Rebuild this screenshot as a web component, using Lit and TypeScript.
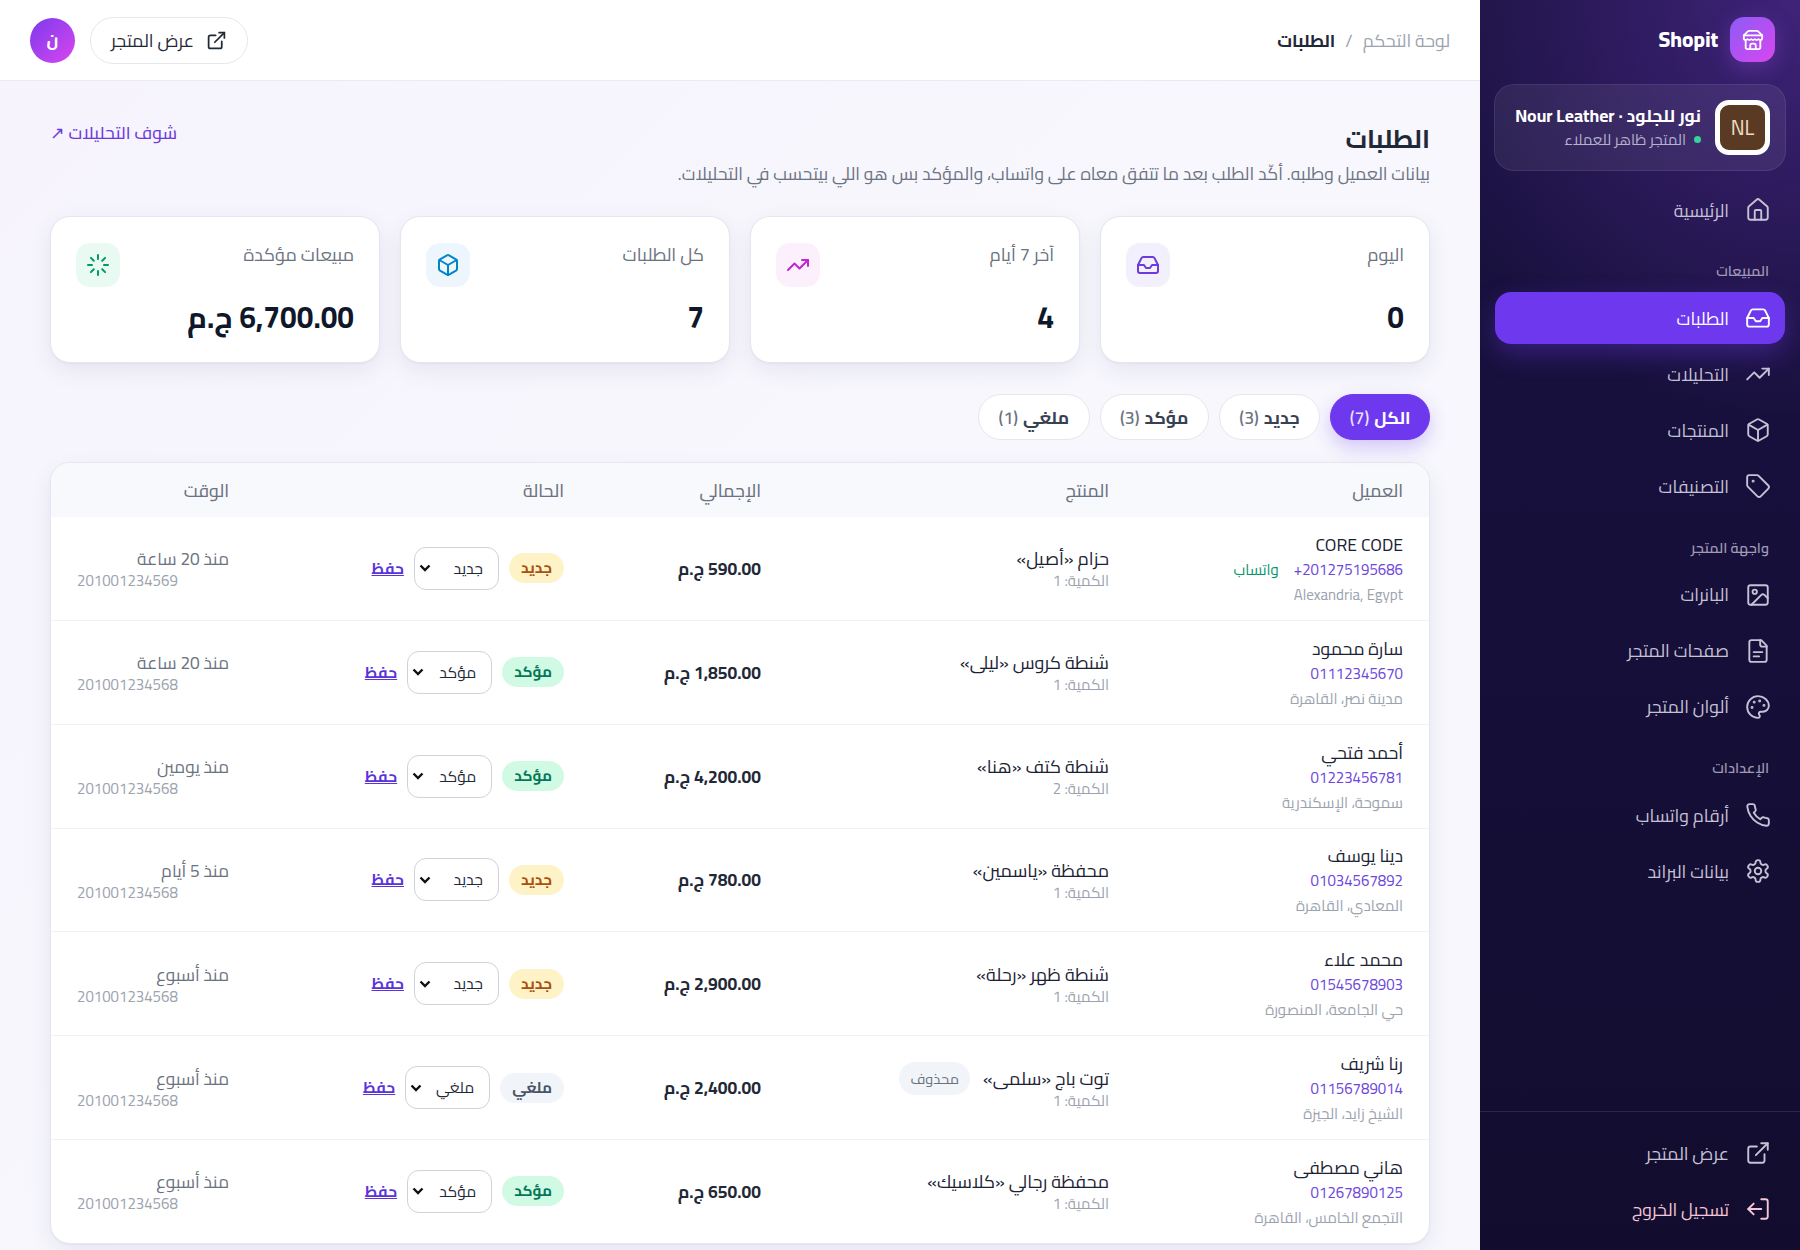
import { LitElement, html, css, svg } from "lit";
import { customElement } from "lit/decorators.js";

const I: Record<string, any> = {
  store: svg`<path d="m2 7 4.41-4.41A2 2 0 0 1 7.83 2h8.34a2 2 0 0 1 1.42.59L22 7"/><path d="M4 12v8a2 2 0 0 0 2 2h12a2 2 0 0 0 2-2v-8"/><path d="M15 22v-4a2 2 0 0 0-2-2h-2a2 2 0 0 0-2 2v4"/><path d="M2 7h20"/><path d="M22 7v3a2 2 0 0 1-2 2a2.7 2.7 0 0 1-1.59-.63.7.7 0 0 0-.82 0A2.7 2.7 0 0 1 16 12a2.7 2.7 0 0 1-1.59-.63.7.7 0 0 0-.82 0A2.7 2.7 0 0 1 12 12a2.7 2.7 0 0 1-1.59-.63.7.7 0 0 0-.82 0A2.7 2.7 0 0 1 8 12a2.7 2.7 0 0 1-1.59-.63.7.7 0 0 0-.82 0A2.7 2.7 0 0 1 4 12a2 2 0 0 1-2-2V7"/>`,
  home: svg`<path d="M15 21v-8a1 1 0 0 0-1-1h-4a1 1 0 0 0-1 1v8"/><path d="M3 10a2 2 0 0 1 .709-1.528l7-5.999a2 2 0 0 1 2.582 0l7 5.999A2 2 0 0 1 21 10v9a2 2 0 0 1-2 2H5a2 2 0 0 1-2-2z"/>`,
  inbox: svg`<polyline points="22 12 16 12 14 15 10 15 8 12 2 12"/><path d="M5.45 5.11 2 12v6a2 2 0 0 0 2 2h16a2 2 0 0 0 2-2v-6l-3.45-6.89A2 2 0 0 0 16.76 4H7.24a2 2 0 0 0-1.79 1.11z"/>`,
  trend: svg`<polyline points="22 7 13.5 15.5 8.5 10.5 2 17"/><polyline points="16 7 22 7 22 13"/>`,
  box: svg`<path d="M21 8a2 2 0 0 0-1-1.73l-7-4a2 2 0 0 0-2 0l-7 4A2 2 0 0 0 3 8v8a2 2 0 0 0 1 1.73l7 4a2 2 0 0 0 2 0l7-4A2 2 0 0 0 21 16Z"/><path d="m3.3 7 8.7 5 8.7-5"/><path d="M12 22V12"/>`,
  tag: svg`<path d="M12.586 2.586A2 2 0 0 0 11.172 2H4a2 2 0 0 0-2 2v7.172a2 2 0 0 0 .586 1.414l8.704 8.704a2.426 2.426 0 0 0 3.42 0l6.58-6.58a2.426 2.426 0 0 0 0-3.42z"/><circle cx="7.5" cy="7.5" r=".5" fill="currentColor"/>`,
  image: svg`<rect width="18" height="18" x="3" y="3" rx="2" ry="2"/><circle cx="9" cy="9" r="2"/><path d="m21 15-3.086-3.086a2 2 0 0 0-2.828 0L6 21"/>`,
  file: svg`<path d="M15 2H6a2 2 0 0 0-2 2v16a2 2 0 0 0 2 2h12a2 2 0 0 0 2-2V7Z"/><path d="M14 2v4a2 2 0 0 0 2 2h4"/><path d="M16 13H8"/><path d="M13 17H8"/>`,
  palette: svg`<circle cx="13.5" cy="6.5" r=".5" fill="currentColor"/><circle cx="17.5" cy="10.5" r=".5" fill="currentColor"/><circle cx="8.5" cy="7.5" r=".5" fill="currentColor"/><circle cx="6.5" cy="12.5" r=".5" fill="currentColor"/><path d="M12 2C6.5 2 2 6.5 2 12s4.5 10 10 10c.926 0 1.648-.746 1.648-1.688 0-.437-.18-.835-.437-1.125-.29-.289-.438-.652-.438-1.125a1.64 1.64 0 0 1 1.668-1.668h1.996c3.051 0 5.555-2.503 5.555-5.554C21.965 6.012 17.461 2 12 2z"/>`,
  phone: svg`<path d="M22 16.92v3a2 2 0 0 1-2.18 2 19.79 19.79 0 0 1-8.63-3.07 19.5 19.5 0 0 1-6-6 19.79 19.79 0 0 1-3.07-8.67A2 2 0 0 1 4.11 2h3a2 2 0 0 1 2 1.72 12.84 12.84 0 0 0 .7 2.81 2 2 0 0 1-.45 2.11L8.09 9.91a16 16 0 0 0 6 6l1.27-1.27a2 2 0 0 1 2.11-.45 12.84 12.84 0 0 0 2.81.7A2 2 0 0 1 22 16.92z"/>`,
  settings: svg`<path d="M12.22 2h-.44a2 2 0 0 0-2 2v.18a2 2 0 0 1-1 1.73l-.43.25a2 2 0 0 1-2 0l-.15-.08a2 2 0 0 0-2.73.73l-.22.38a2 2 0 0 0 .73 2.73l.15.1a2 2 0 0 1 1 1.72v.51a2 2 0 0 1-1 1.74l-.15.09a2 2 0 0 0-.73 2.73l.22.38a2 2 0 0 0 2.73.73l.15-.08a2 2 0 0 1 2 0l.43.25a2 2 0 0 1 1 1.73V20a2 2 0 0 0 2 2h.44a2 2 0 0 0 2-2v-.18a2 2 0 0 1 1-1.73l.43-.25a2 2 0 0 1 2 0l.15.08a2 2 0 0 0 2.73-.73l.22-.39a2 2 0 0 0-.73-2.73l-.15-.08a2 2 0 0 1-1-1.74v-.5a2 2 0 0 1 1-1.74l.15-.09a2 2 0 0 0 .73-2.73l-.22-.38a2 2 0 0 0-2.73-.73l-.15.08a2 2 0 0 1-2 0l-.43-.25a2 2 0 0 1-1-1.73V4a2 2 0 0 0-2-2z"/><circle cx="12" cy="12" r="3"/>`,
  ext: svg`<path d="M15 3h6v6"/><path d="M10 14 21 3"/><path d="M18 13v6a2 2 0 0 1-2 2H5a2 2 0 0 1-2-2V8a2 2 0 0 1 2-2h6"/>`,
  logout: svg`<path d="M15 21h4a2 2 0 0 0 2-2V5a2 2 0 0 0-2-2h-4"/><polyline points="8 17 3 12 8 7"/><line x1="3" y1="12" x2="15" y2="12"/>`,
  loader: svg`<path d="M12 2v4"/><path d="m16.2 7.8 2.9-2.9"/><path d="M18 12h4"/><path d="m16.2 16.2 2.9 2.9"/><path d="M12 18v4"/><path d="m4.9 19.1 2.9-2.9"/><path d="M2 12h4"/><path d="m4.9 4.9 2.9 2.9"/>`,
};
const ic = (n: string, sw = 1.75) => html`<svg class="ic" viewBox="0 0 24 24" fill="none" stroke="currentColor" stroke-width=${sw} stroke-linecap="round" stroke-linejoin="round">${I[n]}</svg>`;

type Order = { name: string; phone: string; wa?: boolean; loc: string; product: string; qty: number; deleted?: boolean; total: string; st: "new" | "ok" | "no"; time: string; ref: string };
const ST = { new: "جديد", ok: "مؤكد", no: "ملغي" };
const orders: Order[] = [
  { name: "CORE CODE", phone: "+201275195686", wa: true, loc: "Alexandria, Egypt", product: "حزام «أصيل»", qty: 1, total: "590.00", st: "new", time: "منذ 20 ساعة", ref: "201001234569" },
  { name: "سارة محمود", phone: "01112345670", loc: "مدينة نصر، القاهرة", product: "شنطة كروس «ليلى»", qty: 1, total: "1,850.00", st: "ok", time: "منذ 20 ساعة", ref: "201001234568" },
  { name: "أحمد فتحي", phone: "01223456781", loc: "سموحة، الإسكندرية", product: "شنطة كتف «هنا»", qty: 2, total: "4,200.00", st: "ok", time: "منذ يومين", ref: "201001234568" },
  { name: "دينا يوسف", phone: "01034567892", loc: "المعادي، القاهرة", product: "محفظة «ياسمين»", qty: 1, total: "780.00", st: "new", time: "منذ 5 أيام", ref: "201001234568" },
  { name: "محمد علاء", phone: "01545678903", loc: "حي الجامعة، المنصورة", product: "شنطة ظهر «رحلة»", qty: 1, total: "2,900.00", st: "new", time: "منذ أسبوع", ref: "201001234568" },
  { name: "رنا شريف", phone: "01156789014", loc: "الشيخ زايد، الجيزة", product: "توت باج «سلمى»", qty: 1, deleted: true, total: "2,400.00", st: "no", time: "منذ أسبوع", ref: "201001234568" },
  { name: "هاني مصطفى", phone: "01267890125", loc: "التجمع الخامس، القاهرة", product: "محفظة رجالي «كلاسيك»", qty: 1, total: "650.00", st: "ok", time: "منذ أسبوع", ref: "201001234568" },
];

@customElement("app-root")
export class AppRoot extends LitElement {
  static styles = css`
    :host { display: block; height: 1250px; overflow: hidden; font-family: "Cairo", Roboto, "Noto Sans Arabic", "DejaVu Sans", sans-serif; color: #111827; }
    * { box-sizing: border-box; }
    .app { display: flex; height: 1250px; direction: rtl; }
    .ic { width: 26px; height: 26px; flex: none; display: block; }

    .side { width: 320px; flex: none; height: 1250px; display: flex; flex-direction: column; color: #c6c2d6;
      background: radial-gradient(400px 420px at 100% 0, #3f2379 0%, rgba(63,35,121,0) 100%), linear-gradient(180deg, #1a1240, #160f3a 50%, #120d2e); }
    .logo { display: flex; gap: 12px; padding: 17px 25px 0; height: 84px; align-items: flex-start; }
    .logo-ic { width: 45px; height: 45px; border-radius: 14px; background: linear-gradient(135deg, #8b5cf6, #d946ef); display: flex; align-items: center; justify-content: center; color: #fff; box-shadow: 0 6px 22px rgba(168,85,247,.3); }
    .logo-ic .ic { width: 22px; height: 22px; }
    .logo-t { color: #fff; font-weight: 800; font-size: 21px; line-height: 45px; direction: ltr; }
    .brand { margin: 0 14px; height: 87px; border-radius: 20px; border: 1px solid rgba(255,255,255,.08); background: rgba(255,255,255,.07); display: flex; align-items: center; gap: 14px; padding: 0 15px; }
    .brand-av { width: 55px; height: 55px; border-radius: 14px; border: 5px solid #fff; background: #5a3a22; color: #ecdcc4; display: flex; align-items: center; justify-content: center; font-size: 20.5px; flex: none; }
    .brand-n { color: #fff; font-weight: 700; font-size: 17.6px; line-height: 24px; white-space: nowrap; }
    .brand-s { font-size: 15px; line-height: 24px; color: #b7b1cc; display: flex; align-items: center; gap: 8px; white-space: nowrap; }
    .dot { width: 7px; height: 7px; border-radius: 50%; background: #34d399; }
    .nav { flex: 1; padding: 13px 15px 0; display: flex; flex-direction: column; gap: 4px; }
    .item { height: 52px; border-radius: 16px; display: flex; align-items: center; gap: 16px; padding: 0 14px; font-size: 17.6px; white-space: nowrap; }
    .item.on { background: #6d38ee; color: #fff; box-shadow: 0 10px 26px rgba(109,56,238,.35); }
    .sec { font-size: 14.5px; font-weight: 600; color: #a09ab5; padding: 0 16px; height: 20px; line-height: 20px; margin: 21.5px 0 7px; }
    .sec.first { margin-top: 21px; }
    .foot { border-top: 1px solid rgba(255,255,255,.1); padding: 15px 15px; display: flex; flex-direction: column; gap: 4px; height: 139px; }
    .pink { color: #f5c6d8; }

    .main { flex: 1; min-width: 0; background: linear-gradient(135deg, #f6f3fd, #f7f7fd 50%, #f7f7fd); display: flex; flex-direction: column; height: 1250px; overflow: hidden; }
    .top { height: 81px; flex: none; background: #fff; border-bottom: 1px solid #ebe9f3; display: flex; align-items: center; justify-content: space-between; padding: 0 30px; }
    .crumb { display: flex; gap: 10px; font-size: 17.6px; color: #9ca3af; align-items: center; }
    .crumb b { color: #1f2937; font-weight: 700; font-size: 17.6px; }
    .top-l { display: flex; align-items: center; gap: 15px; }
    .show { height: 47px; border: 1px solid #e5e7eb; border-radius: 24px; background: #fff; display: flex; align-items: center; gap: 12px; padding: 0 20px; font-size: 17.6px; color: #1f2937; }
    .show .ic { width: 21px; height: 21px; }
    .me { width: 45px; height: 45px; border-radius: 50%; background: linear-gradient(135deg, #7c3aed, #d946ef); color: #fff; font-weight: 700; display: flex; align-items: center; justify-content: center; font-size: 17px; }

    .page { padding: 39px 50px 0; }
    .head { display: flex; justify-content: space-between; align-items: flex-start; height: 96px; }
    .title { font-size: 25.6px; font-weight: 700; line-height: 38px; margin: 0; color: #1f2937; }
    .sub { font-size: 17.5px; line-height: 26px; color: #6b7280; margin: 3px 0 0; }
    .lnk { color: #6d3bdc; font-size: 17.4px; line-height: 26px; font-weight: 500; }
    .cards { display: grid; grid-template-columns: repeat(4, 1fr); gap: 20px; }
    .card { height: 147px; background: #fff; border: 1px solid #e7e6f0; border-radius: 20px; padding: 26px 25px 0; box-shadow: 0 8px 24px rgba(30,20,80,.07), 0 1px 2px rgba(30,20,80,.04); }
    .card-r { display: flex; justify-content: space-between; height: 44px; }
    .card-l { font-size: 18px; color: #6b7280; line-height: 24px; }
    .card-i { width: 44px; height: 44px; border-radius: 14px; display: flex; align-items: center; justify-content: center; }
    .card-i .ic { width: 24px; height: 24px; }
    .v { background: #f3f0fe; color: #6d3bdc; } .f { background: #fdf0fd; color: #c026d3; } .b { background: #eef6fd; color: #0284c7; } .g { background: #e8faf2; color: #059669; }
    .card-v { font-size: 30px; font-weight: 700; line-height: 40px; margin-top: 10px; color: #0f172a; }
    .tabs { display: flex; gap: 10px; margin: 31px 0 22px; height: 46px; }
    .tab { height: 46px; border-radius: 23px; background: #fff; border: 1px solid #e5e7eb; padding: 0 19.5px; font-size: 17.6px; font-weight: 700; color: #374151; display: flex; align-items: center; gap: 5px; white-space: nowrap; }
    .tab span { font-weight: 600; color: #6b7280; }
    .tab.on { background: #6d38ee; color: #fff; border-color: #6d38ee; padding: 0 18.5px; box-shadow: 0 8px 18px rgba(109,56,238,.25); }
    .tab.on span { color: #e9e3ff; }
    .wrap { background: #fff; border: 1px solid #e7e6f0; border-radius: 20px; overflow: hidden; box-shadow: 0 8px 24px rgba(30,20,80,.07), 0 1px 2px rgba(30,20,80,.04); }
    table { border-collapse: collapse; width: 100%; table-layout: fixed; }
    th { height: 54px; background: #f8f9fc; font-size: 17.6px; font-weight: 500; color: #6b7280; text-align: right; padding: 0 26px; }
    td { padding: 13.93px 26px; border-top: 1px solid #f1f2f6; vertical-align: middle; text-align: right; }
    td.cust { padding-top: 14.93px; padding-bottom: 12.93px; }
    td.low { padding-top: 15.43px; padding-bottom: 12.43px; }
    tbody tr:first-child td { border-top: 0; }
    .n { font-size: 17.6px; line-height: 25px; white-space: nowrap; color: #1a2233; }
    .l2 { line-height: 25px; font-size: 15px; display: flex; gap: 15px; }
    .ph { color: #6d46dc; }
    .wa { color: #059669; }
    .loc { font-size: 15px; line-height: 25px; color: #9ca3af; white-space: nowrap; }
    .pn { display: flex; align-items: center; gap: 13px; height: 22px; }
    .pn-t { font-size: 18px; line-height: 22px; color: #1a2233; white-space: nowrap; }
    .q { font-size: 15px; line-height: 21px; color: #9ca3af; }
    .del { font-size: 14.5px; background: #f1f5f9; color: #6b7280; border-radius: 17px; height: 33px; line-height: 33px; padding: 0 11px; }
    .tot { font-size: 17.5px; font-weight: 700; white-space: nowrap; color: #1f2937; }
    .ctl { display: flex; align-items: center; gap: 10px; }
    .bdg { height: 30px; line-height: 30px; border-radius: 15px; padding: 0 12px; font-size: 15.2px; font-weight: 700; white-space: nowrap; }
    .new { background: #fef3c7; color: #a8500d; } .ok { background: #d1fae5; color: #047857; } .no { background: #f1f5f9; color: #475569; }
    select { appearance: none; width: 85px; height: 43px; border: 1px solid #cfd2da; border-radius: 12px; font: inherit; font-size: 15.5px; padding: 0 15px 0 20px; color: #1f2937;
      background: #fff url("data:image/svg+xml,%3Csvg xmlns='http://www.w3.org/2000/svg' viewBox='0 0 12 8'%3E%3Cpath d='M1.5 1.5 6 6l4.5-4.5' fill='none' stroke='%23111' stroke-width='2.4'/%3E%3C/svg%3E") no-repeat left 4px center / 12px 8px; }
    .save { color: #5b34d9; font-size: 15.5px; font-weight: 700; text-decoration: underline; white-space: nowrap; }
    .t { font-size: 17.3px; line-height: 22px; color: #6b7280; white-space: nowrap; }
    .r { font-size: 15px; line-height: 21px; color: #9ca3af; direction: ltr; text-align: left; }
  `;

  item(icon: string, label: string, on = false) {
    return html`<div class="item ${on ? "on" : ""}">${ic(icon)}<span>${label}</span></div>`;
  }

  card(label: string, value: string, icon: string, tone: string) {
    return html`<div class="card"><div class="card-r"><div class="card-l">${label}</div><div class="card-i ${tone}">${ic(icon, 2)}</div></div><div class="card-v">${value}</div></div>`;
  }

  render() {
    return html`<div class="app">
      <aside class="side">
        <div class="logo"><div class="logo-ic">${ic("store", 2)}</div><div class="logo-t">Shopit</div></div>
        <div class="brand"><div class="brand-av">NL</div><div><div class="brand-n">نور للجلود · Nour Leather</div><div class="brand-s"><span class="dot"></span>المتجر ظاهر للعملاء</div></div></div>
        <nav class="nav">
          ${this.item("home", "الرئيسية")}
          <div class="sec first">المبيعات</div>
          ${this.item("inbox", "الطلبات", true)}
          ${this.item("trend", "التحليلات")}
          ${this.item("box", "المنتجات")}
          ${this.item("tag", "التصنيفات")}
          <div class="sec">واجهة المتجر</div>
          ${this.item("image", "البانرات")}
          ${this.item("file", "صفحات المتجر")}
          ${this.item("palette", "ألوان المتجر")}
          <div class="sec">الإعدادات</div>
          ${this.item("phone", "أرقام واتساب")}
          ${this.item("settings", "بيانات البراند")}
        </nav>
        <div class="foot">
          ${this.item("ext", "عرض المتجر")}
          <div class="item pink">${ic("logout")}<span>تسجيل الخروج</span></div>
        </div>
      </aside>
      <main class="main">
        <header class="top">
          <div class="crumb"><span>لوحة التحكم</span><span>/</span><b>الطلبات</b></div>
          <div class="top-l"><div class="show">${ic("ext", 2)}<span>عرض المتجر</span></div><div class="me">ن</div></div>
        </header>
        <div class="page">
          <div class="head">
            <div><h1 class="title">الطلبات</h1><p class="sub">بيانات العميل وطلبه. أكّد الطلب بعد ما تتفق معاه على واتساب، والمؤكد بس هو اللي بيتحسب في التحليلات.</p></div>
            <div class="lnk">شوف التحليلات ↗</div>
          </div>
          <div class="cards">
            ${this.card("اليوم", "0", "inbox", "v")}
            ${this.card("آخر 7 أيام", "4", "trend", "f")}
            ${this.card("كل الطلبات", "7", "box", "b")}
            ${this.card("مبيعات مؤكدة", "6,700.00 ج.م", "loader", "g")}
          </div>
          <div class="tabs">
            <div class="tab on">الكل <span>(7)</span></div>
            <div class="tab">جديد <span>(3)</span></div>
            <div class="tab">مؤكد <span>(3)</span></div>
            <div class="tab">ملغي <span>(1)</span></div>
          </div>
          <div class="wrap">
            <table>
              <colgroup><col style="width:294px"><col style="width:348px"><col style="width:197px"><col style="width:335px"><col></colgroup>
              <thead><tr><th>العميل</th><th>المنتج</th><th>الإجمالي</th><th>الحالة</th><th>الوقت</th></tr></thead>
              <tbody>
                ${orders.map((o) => html`<tr>
                  <td class="cust"><div class="n">${o.name}</div><div class="l2"><span class="ph" dir="ltr">${o.phone}</span>${o.wa ? html`<span class="wa">واتساب</span>` : ""}</div><div class="loc">${o.loc}</div></td>
                  <td class="low"><div class="pn"><div class="pn-t">${o.product}</div>${o.deleted ? html`<span class="del">محذوف</span>` : ""}</div><div class="q">الكمية: ${o.qty}</div></td>
                  <td><div class="tot">${o.total} ج.م</div></td>
                  <td><div class="ctl"><span class="bdg ${o.st}">${ST[o.st]}</span><select>${Object.entries(ST).map(([k, v]) => html`<option value=${k} ?selected=${k === o.st}>${v}</option>`)}</select><span class="save">حفظ</span></div></td>
                  <td class="low"><div class="t">${o.time}</div><div class="r">${o.ref}</div></td>
                </tr>`)}
              </tbody>
            </table>
          </div>
        </div>
      </main>
    </div>`;
  }
}
